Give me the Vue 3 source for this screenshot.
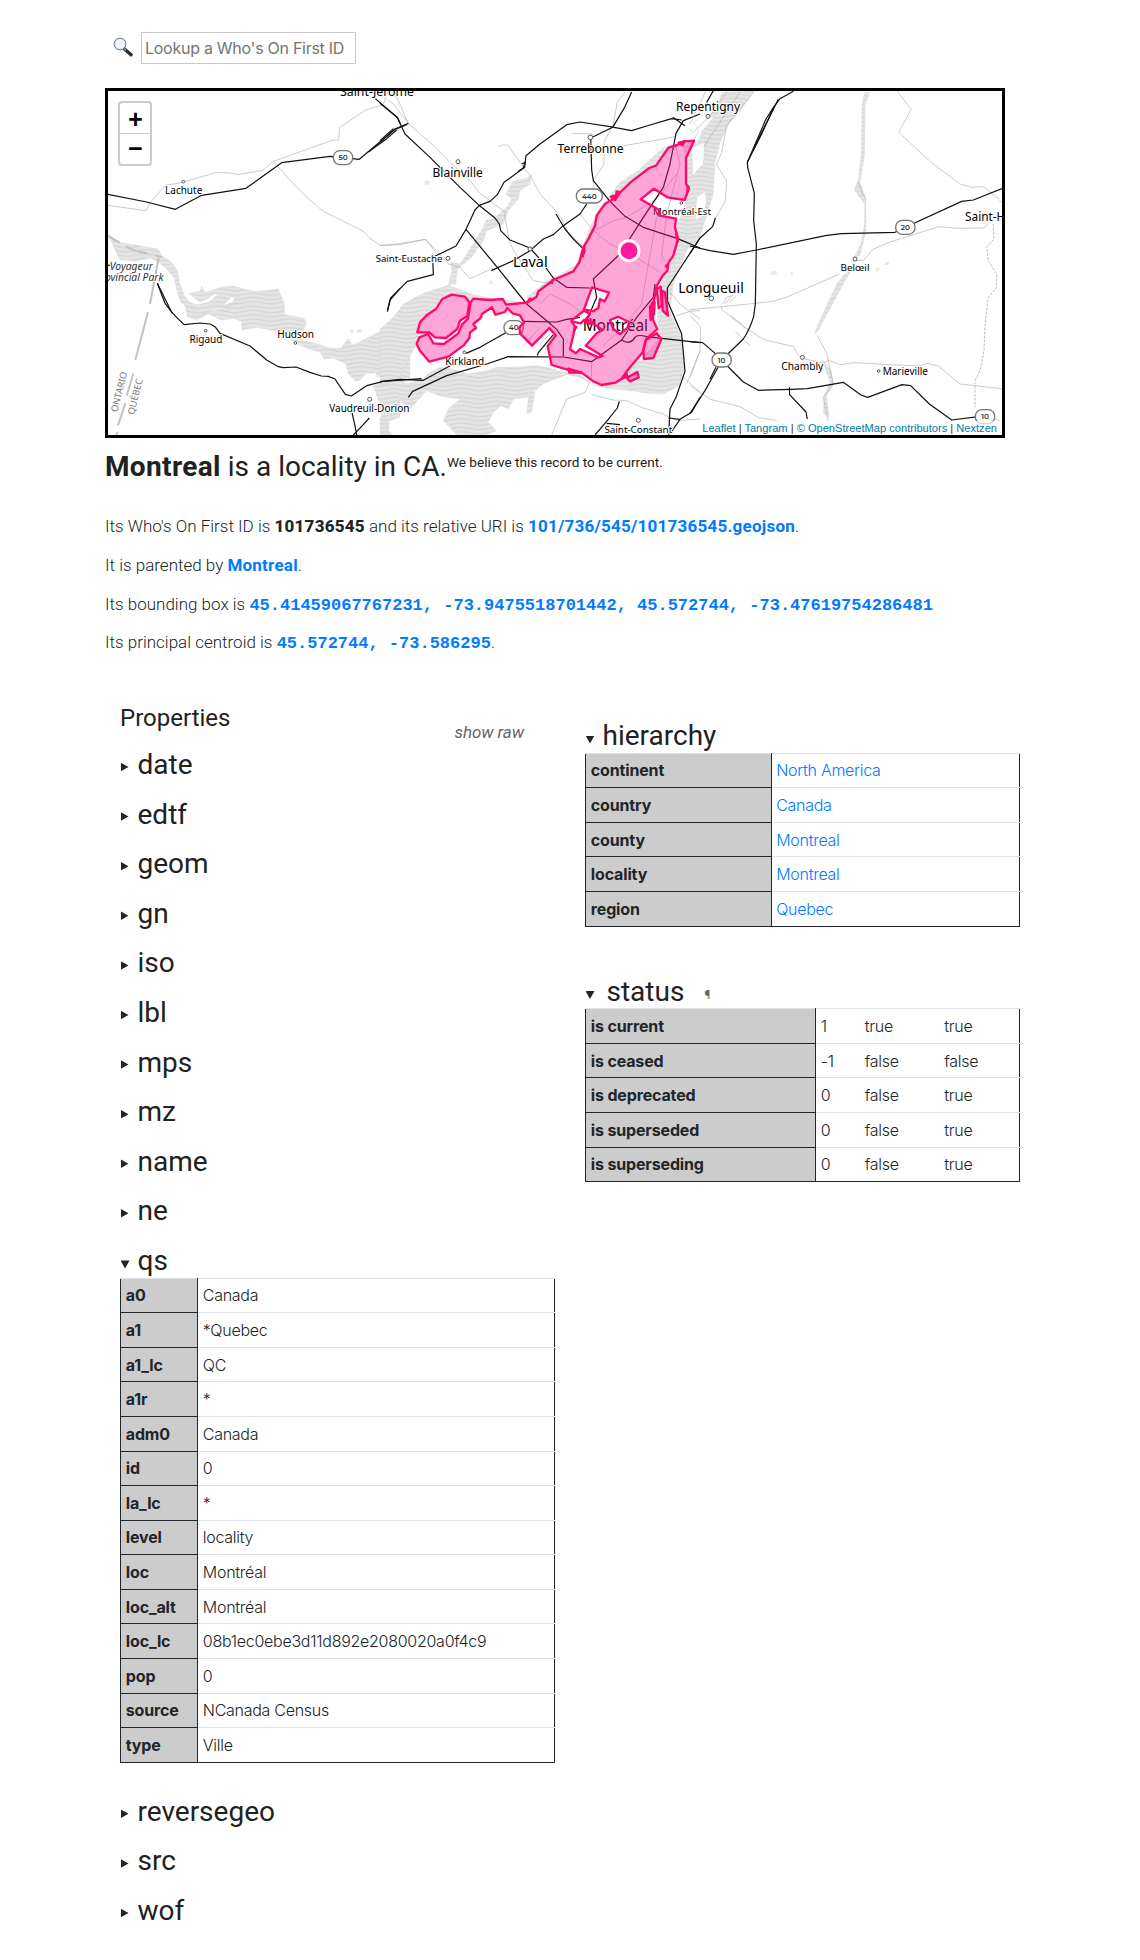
<script setup>
const closedTop = ['date', 'edtf', 'geom', 'gn', 'iso', 'lbl', 'mps', 'mz', 'name', 'ne']
const closedBottom = ['reversegeo', 'src', 'wof']

const qs = [
  ['a0', 'Canada'], ['a1', '*Quebec'], ['a1_lc', 'QC'], ['a1r', '*'], ['adm0', 'Canada'],
  ['id', '0'], ['la_lc', '*'], ['level', 'locality'], ['loc', 'Montréal'], ['loc_alt', 'Montréal'],
  ['loc_lc', '08b1ec0ebe3d11d892e2080020a0f4c9'], ['pop', '0'], ['source', 'NCanada Census'], ['type', 'Ville'],
]
const hierarchy = [
  ['continent', 'North America'], ['country', 'Canada'], ['county', 'Montreal'],
  ['locality', 'Montreal'], ['region', 'Quebec'],
]
const status = [
  ['is current', '1', 'true', 'true'],
  ['is ceased', '-1', 'false', 'false'],
  ['is deprecated', '0', 'false', 'true'],
  ['is superseded', '0', 'false', 'true'],
  ['is superseding', '0', 'false', 'true'],
]

// City boundary: main island (with holes), western tip, and small islands.
const cityMain = `M942 170 L918 222 L918 300 L927 312 L914 348 L862 340 L822 314 L782 346 L838 378 L836 394 L888 404 L885 430 L894 464 L880 515 L866 535 L862 560 L848 575 L830 606 L822 650 L815 660 L820 710 L832 735 L798 765 L788 805 L740 862 L735 878 L706 896 L665 903 L640 892 L608 868 L560 856 L515 843 L503 786 L527 754 L508 732 L456 785 L420 748 L418 730 L432 716 L420 694 L398 688 L382 672 L375 684 L346 692 L336 670 L306 690 L302 702 L280 720 L288 732 L270 745 L268 762 L250 785 L205 818 L148 833 L120 800 L110 780 L118 760 L144 750 L160 778 L192 780 L235 748 L246 722 L264 704 L272 655 L280 644 L330 648 L368 645 L378 662 L440 656 L470 638 L475 622 L520 588 L580 562 L598 535 L610 490 L625 465 L645 425 L650 395 L675 360 L700 345 L755 292 L808 252 L828 245 L866 190 L892 183 L912 172 Z`
const cityHoles = `M636 610 L687 626 L674 652 L660 645 L655 672 L640 682 L612 676 Z
  M612 680 L630 690 L618 705 L668 738 L650 748 L617 785 L668 816 L655 820 L600 795 L588 808 L570 796 L582 745 L584 727 L574 710 Z
  M690 708 L715 698 L748 715 L742 732 L720 750 L700 735 Z`
const cityWest = 'M112 745 L120 715 L142 692 L168 675 L187 645 L215 632 L255 638 L268 655 L262 696 L240 710 L232 735 L198 762 L165 760 L148 745 Z'

// The map is drawn in three side-by-side sections, each with its own origin.
const sections = [
  {
    x: 0,
    water: [
      'M24 450 L60 476 L110 483 L176 495 L184 512 L215 535 L232 560 L240 600 L252 632 L268 655 L290 662 L325 655 L352 632 L345 628 L330 640 L300 655 L280 640 L268 628 L300 622 L305 606 L315 625 L370 608 L400 606 L432 615 L470 622 L510 618 L535 614 L545 640 L554 662 L553 692 L580 696 L612 703 L620 718 L610 738 L590 762 L620 770 L660 782 L690 792 L722 793 L745 762 L758 784 L790 768 L840 742 L890 728 L930 712 L930 884 L830 878 L828 866 L800 868 L822 850 L830 848 L812 854 L795 872 L780 888 L768 892 L745 870 L738 840 L700 822 L672 826 L662 806 L630 796 L590 780 L545 745 L510 738 L470 730 L425 738 L425 712 L400 704 L365 708 L325 690 L290 708 L262 700 L256 668 L240 650 L230 618 L222 582 L200 555 L172 532 L150 522 L110 532 L60 528 L46 500 Z',
      'M820 905 L850 892 L900 888 L900 1000 L868 1010 L866 1040 L880 1053 L852 1053 L840 1020 L845 990 L835 950 Z',
    ],
    gaps: ['M370 662 L395 638 L405 640 L400 655 L372 664 Z', 'M305 692 L345 674 L400 662 L414 656 L380 668 Z'],
    minor: [
      'M24 364 L138 380 L150 356 L196 304 L240 297 L350 265 L388 267 L415 272 L487 259 L520 232 L660 182 L692 170 L712 168 L716 166 L719 130 L797 78 L850 62 L862 24',
      'M520 232 L560 278 L622 342 L670 382 L790 442 L806 460 L840 484 L900 482 L978 466 L1010 510',
      'M862 24 L890 40 L925 118',
    ],
    major: [
      'M24 331 L140 354 L226 376 L305 334 L438 313 L545 236 L690 217 L778 226 L885 136 L920 122',
      'M805 204 L860 164 L890 138',
      'M172 598 L215 685 L252 722 L300 717 L330 720 L345 728 L360 748 L450 786 L500 828 L535 848 L550 851 L588 849 L630 865 L664 876 L685 877 L705 885 L736 931 L754 936 L800 905 L850 892 L965 884',
      'M172 598 L195 658 L218 688',
      'M756 985 L766 1030 L770 1053 M760 1053 L790 1022 L808 1002',
      'M826 44 L893 102 L901 120', 'M900 614 L870 648 L862 682', 'M22 543 L34 545',
    ],
  },
  {
    x: 840,
    water: [
      'M0 736 L40 700 L70 660 L130 628 L205 604 L222 610 L280 632 L350 645 L440 655 L450 672 L380 662 L300 655 L230 700 L160 740 L105 790 L70 850 L60 880 L78 900 L130 885 L145 868 L180 850 L205 852 L265 870 L310 862 L350 850 L420 848 L470 845 L500 850 L540 862 L600 870 L640 905 L700 900 L740 862 L790 820 L840 760 L832 700 L840 600 L862 560 L885 490 L890 430 L920 345 L920 230 L960 150 L960 440 L920 500 L880 600 L870 680 L905 760 L912 860 L900 905 L850 930 L800 928 L750 920 L700 915 L640 905 L600 880 L560 872 L490 900 L465 920 L455 985 L440 990 L445 940 L400 945 L385 975 L362 965 L340 985 L325 1015 L350 1040 L320 1052 L230 1052 L190 1010 L205 975 L240 945 L185 938 L140 920 L90 975 L60 950 L40 905 L0 905 Z',
      'M0 1000 L20 1020 L25 1050 L0 1053 Z',
      'M205 604 L215 560 L212 535 L240 540 L270 495 L310 430 L318 408 L340 404 L380 370 L395 345 L378 330 L400 290 L440 282 L455 270 L450 300 L420 320 L415 345 L385 380 L370 420 L320 440 L310 470 L275 520 L232 556 L228 600 Z',
      'M440 640 L500 590 L560 560 L590 540 L625 440 L660 370 L690 335 L720 295 L780 255 L850 190 L885 195 L850 240 L760 290 L705 345 L650 430 L600 550 L520 595 L450 660 Z',
    ],
    gaps: [cityMain, cityWest],
    minor: [
      'M0 485 L50 480 L135 466 L170 500 L205 540 L240 550 L270 584 L340 552',
      'M22 48 L40 60 L85 118 L150 175 L210 235 L262 280 L300 328 L372 382 L388 470 L400 498 L460 590 L520 600',
      'M355 188 Q370 178 384 184 L425 242 L452 278 L480 330 L520 372 L545 405 L560 440 L620 500',
      'M735 24 L712 55 L700 120 L672 175 L672 240 L640 290 L644 330',
      'M600 390 L640 440 L690 480 L760 515 L840 565', 'M635 445 L700 410 L740 400 L830 345 L890 270',
      'M885 180 L900 240 L860 390 L845 515 L855 530', 'M830 400 L798 580 L785 660 L720 740 L690 765 L670 785',
      'M635 932 L700 948 L740 950 L790 972 L850 990 L890 1010 L960 1005',
      'M515 1053 L560 945 L615 925 L635 880 L634 830', 'M480 660 L510 630 L570 660 L610 690',
      'M865 620 L900 660 L960 705 M890 695 L930 682 L960 680 M900 870 L960 925 M920 900 L960 800',
      'M700 190 L760 180 L850 165 L885 158 M575 148 L640 150 M432 785 L480 730 M472 765 L510 732 M480 780 L518 742',
    ],
    major: [
      'M0 58 L52 100 L75 150 L150 220 L240 310 L295 362 L345 402 L358 420 L362 440 L390 468 L450 492 L475 520 L520 582 L560 610 L630 612',
      'M0 175 L45 135 L85 118', 'M0 170 L40 134',
      'M158 520 L228 486 L258 436 L285 378 L298 364 L330 352 L352 332 L372 295 L434 250 L438 215 L480 180 L560 122 L600 114 L690 128 L755 140 L800 126 L875 104 L905 108',
      'M158 520 L160 572 L82 592 L32 642 L22 682',
      'M755 24 L734 70 L698 130 L632 162 L635 258 L640 290 L690 352 L735 397 L790 430 L893 464 L960 492',
      'M258 436 L350 548 L440 660 L500 710 L530 736 L550 765 L550 816',
      'M334 560 L400 530 L450 500 L490 465 L520 452 L550 425 L600 390 L620 360',
      'M425 240 L435 235 L430 252 L415 262 M528 390 L555 435 L580 465 L615 500 L612 510',
      'M0 893 L60 886 L130 889 L180 862 L220 840 M258 808 L300 790 L380 745 M430 712 L530 714 L560 706 L600 700 M620 710 L650 640 L640 585 L720 510 L790 400 L850 310 L870 240 L888 148 L910 110 L960 90',
      'M85 940 L98 922 L200 875 L320 840 L385 818 L550 819 L635 833 L725 768 L770 700 L820 640 L825 600',
      'M472 815 L475 806 L520 752', 'M960 462 L862 612 L862 650 L905 750 L915 862 L888 940 L870 975 L866 1053',
      'M725 768 Q750 785 765 760 Q772 750 800 758 L845 763 L960 776', 'M865 1002 L900 1006 L935 985 L960 940 M900 1006 L870 1050',
      'M718 952 L712 972 L680 1012 L645 1053 M680 1018 L720 1022 M878 100 L915 125',
    ],
  },
  {
    x: 1770,
    water: [
      'M95 24 L192 20 L150 80 L118 118 L92 170 L75 235 L70 330 L45 410 L30 460 L0 492 L-12 470 L-8 270 L-20 190 L10 165 L40 130 L55 100 L85 60 Z',
      'M524 24 L540 24 L526 60 L524 215 L510 295 L528 345 L528 440 L510 515 L492 522 L512 480 L522 430 L524 360 L492 318 L504 292 L514 205 L516 60 Z',
      'M492 532 L484 560 L465 590 L382 745 L374 748 L382 725 L440 600 L460 575 L480 560 Z',
      'M396 825 L424 860 L430 900 L410 935 L418 1000 L400 990 L402 935 L420 895 Z',
    ],
    gaps: ['M5 190 L45 175 L40 240 L8 275 Z', 'M20 340 L45 322 L50 350 L40 395 L15 410 Z', 'M12 115 L45 90 L72 100 L38 140 L20 185 L12 172 L25 140 Z'],
    minor: [
      'M192 24 L110 125 L95 205 L80 242 L110 292 L106 352 L75 405', 'M46 24 L0 120 M110 24 L60 95 L10 145 L0 135 M150 24 L40 190',
      'M620 20 L664 76 L626 145 L720 232 L810 300 L845 310 L880 308 L920 340 L936 356',
      'M0 677 L94 668 L198 658 L252 651 L290 640 L448 570 M500 530 L522 528 L548 496 L600 474 L745 428 L800 433 L880 432 L896 420',
      'M94 668 L95 676 L160 728 L222 767 L312 788 L322 810 L334 822 L358 828 L400 838 L415 829 L452 842 L492 836 L600 842 L690 846 L712 838 L745 846 L810 900 L936 914',
      'M0 695 L32 728 L30 802 L0 880 M0 905 L60 946 L150 968 L205 1000 L250 1008 L300 1030', 'M382 755 L410 808 L430 900 L400 940 L418 1030',
      'M98 660 L110 640 L125 635 M104 660 L130 632 M118 655 L138 638 M914 1003 L936 1016', 'M505 295 L518 330 L528 345',
      'M122 694 L175 738 M136 742 L180 785',
    ],
    major: [
      'M70 20 L50 55', 'M310 22 L270 44 L252 68 L228 105 L172 235 L173 250 L193 328 L191 410 L199 480 L196 660 L191 697 Q180 735 160 765 L98 825 L45 920 L0 988',
      'M252 68 L215 150 L172 235', 'M265 46 L238 100 L190 195',
      'M0 486 L60 500 L130 511 L200 498 L410 454 L455 449 L615 445 L646 430 L815 352 L850 348 L936 314',
      'M76 402 L68 428 L30 462 L0 508', 'M0 773 L38 776 L72 805 L94 828 L160 894 L205 919 L300 916 L352 914 L460 895 L513 933 L533 940 L636 902 L662 905 L718 960 L785 1008 L865 998',
      'M298 910 L299 932 L348 984 L352 1005', 'M78 850 L60 885',
    ],
  },
]

// Place names; x and y are the middle of the baseline.
const labels = [
  { t: 'Saint-Jérôme', x: 831, y: 35, s: 37 }, { t: 'Lachute', x: 251, y: 331, s: 30, c: [250, 293, 4] },
  { t: 'Rigaud', x: 318, y: 777, s: 30, c: [317, 740, 4] }, { t: 'Hudson', x: 587, y: 762, s: 30, c: [586, 777, 4] },
  { t: 'Vaudreuil-Dorion', x: 808, y: 984, s: 30, c: [809, 946, 6] }, { t: 'Saint-Eustache', x: 927, y: 534, s: 29, c: [1044, 523, 6] },
  { t: 'Blainville', x: 1073, y: 278, s: 36, c: [1074, 233, 6] }, { t: 'Terrebonne', x: 1472, y: 208, s: 36.5, c: [1471, 160, 7] },
  { t: 'Laval', x: 1291, y: 549, s: 43, c: [1290, 495, 6] }, { t: 'Kirkland', x: 1094, y: 844, s: 30, c: [1093, 805, 4] },
  { t: 'Saint-Constant', x: 1615, y: 1048, s: 29.5, c: [1615, 1009, 6] }, { t: 'Repentigny', x: 1824, y: 80, s: 36, c: [1824, 97, 6] },
  { t: 'Montréal-Est', x: 1746, y: 393, s: 29, c: [1744, 357, 4] }, { t: 'Montréal', x: 1546, y: 740, s: 46 },
  { t: 'Longueuil', x: 1833, y: 626, s: 42, c: [1834, 643, 7] }, { t: 'Belœil', x: 2265, y: 562, s: 29.5, c: [2265, 525, 6] },
  { t: 'Chambly', x: 2107, y: 859, s: 30.5, c: [2107, 820, 6] }, { t: 'Marieville', x: 2416, y: 872, s: 30, c: [2336, 861, 4] },
  { t: 'Saint-Hyacinthe', x: 2726, y: 410, s: 35.5 },
]
const shields = [
  { t: '50', x: 729, y: 221, w: 58 }, { t: '440', x: 1468, y: 336, w: 78 }, { t: '40', x: 1241, y: 731, w: 58 },
  { t: '10', x: 1865, y: 828, w: 58 }, { t: '20', x: 2416, y: 430, w: 58 }, { t: '10', x: 2655, y: 998, w: 58 },
]
const attribution = ['Leaflet', 'Tangram', '© OpenStreetMap contributors', 'Nextzen']
</script>

<template>
  <main class="page">
    <form class="lookup" @submit.prevent>
      <svg class="lens" viewBox="0 0 20 20" width="20" height="20">
        <path d="M11.5 12 L18 17.8" stroke="#25313b" stroke-width="3.4" stroke-linecap="round" />
        <path d="M10.8 11.2 L13 13.2" stroke="#8b98a3" stroke-width="1.5" />
        <circle cx="7" cy="7" r="5.9" fill="#f1f4f6" stroke="#5d6871" stroke-width="1" />
        <circle cx="7" cy="7" r="5" fill="none" stroke="#cfd8df" stroke-width=".7" />
      </svg>
      <input type="text" placeholder="Lookup a Who's On First ID">
    </form>

    <section class="map">
      <svg class="canvas" viewBox="24 21 2682 1032" width="894" height="344" fill="none">
        <defs>
          <pattern id="waves" width="108" height="13" patternUnits="userSpaceOnUse">
            <rect width="108" height="13" fill="#e5e5e5" />
            <path d="M0 6.5 C18 2 36 2 54 6.5 S90 11 108 6.5" fill="none" stroke="#d6d6d6" stroke-width="4" />
          </pattern>
        </defs>
        <rect x="24" y="21" width="2682" height="1032" fill="#fff" />
        <g v-for="s in sections" :key="'w' + s.x" :transform="`translate(${s.x} 0)`">
          <path v-for="(d, i) in s.water" :key="i" :d="d" fill="url(#waves)" stroke="#d4d4d4" stroke-width="1.5" stroke-dasharray="3 3" />
          <path v-for="(d, i) in s.gaps" :key="'g' + i" :d="d" fill="#fff" stroke="#ccc" stroke-width="1.5" />
        </g>
        <path d="M2680 420 L2682 465 L2660 490 L2665 530 L2690 570 L2690 610 L2665 640 L2655 720 L2652 800 L2640 860 L2625 890 L2625 970" stroke="#bbb" stroke-width="3" stroke-dasharray="8 4" />
        <g fill="#e8e8e8">
          <rect x="2012" y="562" width="18" height="11" /><rect x="2355" y="534" width="12" height="9" />
          <rect x="2328" y="552" width="10" height="10" /><rect x="2071" y="565" width="8" height="8" />
          <rect x="974" y="290" width="14" height="12" /><rect x="1168" y="590" width="10" height="10" />
          <rect x="750" y="738" width="10" height="9" /><rect x="772" y="735" width="12" height="12" />
        </g>
        <g v-for="s in sections" :key="'r' + s.x" :transform="`translate(${s.x} 0)`" stroke-linejoin="round">
          <path v-for="(d, i) in s.minor" :key="'m' + i" :d="d" stroke="#b0b0b0" stroke-width="2" />
          <path v-for="(d, i) in s.major" :key="'M' + i" :d="d" stroke="#111" stroke-width="3.6" />
        </g>
        <path d="M24 456 L60 476 M78 487 Q102 502 142 508 M166 514 L186 520 M176 522 L150 660 M144 684 L106 828 M100 868 L80 935 M76 958 L54 1024 M53 1044 L50 1053" stroke="#c2c2c2" stroke-width="6" />

        <g class="names">
          <template v-for="l in labels" :key="l.t">
            <text :x="l.x" :y="l.y" :font-size="l.s">{{ l.t }}</text>
            <circle v-if="l.c" :cx="l.c[0]" :cy="l.c[1]" :r="l.c[2]" fill="#fff" stroke="#555" stroke-width="3" />
          </template>
          <text x="94" y="557" font-size="31" font-style="italic" class="park">Voyageur</text>
          <text x="88" y="592" font-size="31" font-style="italic" class="park">Provincial Park</text>
          <text class="border-name" transform="translate(67 926) rotate(-76)" font-size="28">ONTARIO</text>
          <text class="border-name" transform="translate(115 940) rotate(-76)" font-size="28">QUÉBEC</text>
        </g>
        <g v-for="(s, i) in shields" :key="'s' + i">
          <rect :x="s.x - s.w / 2" :y="s.y - 21" :width="s.w" height="42" rx="20" fill="#fff" stroke="#777" stroke-width="4" />
          <text class="shield" :x="s.x" :y="s.y + 8">{{ s.t }}</text>
        </g>

        <g transform="translate(840 0)" fill="#ff1493" fill-opacity=".38" fill-rule="evenodd" stroke="#ff0a6c" stroke-width="7" stroke-linejoin="round">
          <path :d="cityMain + cityHoles" />
          <path :d="cityWest" />
          <path d="M830 615 L842 608 L846 665 L836 672 Z M846 620 L855 625 L864 695 L848 680 Z M798 768 L830 748 L844 766 L820 822 L792 825 L790 800 Z M740 882 L772 864 L776 880 L750 892 Z" />
          <path d="M565 854 L605 866 L568 866 Z M896 176 L914 172 L908 184 Z M692 338 L708 335 L710 322 L720 326 L705 348 Z M810 668 L824 655 L822 690 L812 708 Z M724 885 L738 866 L742 876 Z" />
          <path d="M608 520 L614 485 M515 600 L518 585 M440 656 L450 644 L458 650 M574 712 L602 718 L612 708 L630 720 L632 702 M590 726 L580 745 M888 448 L894 475 M862 540 L856 550 M924 304 L922 325" fill="none" />
        </g>
        <circle cx="1587" cy="500" r="30" fill="#ff1a9c" stroke="#fff" stroke-width="9" />
      </svg>
      <div class="zoom"><span>+</span><span>−</span></div>
      <div class="attribution">
        <template v-for="(a, i) in attribution" :key="a"><template v-if="i"> | </template><a>{{ a }}</a></template>
      </div>
    </section>

    <h1 class="title"><span><strong>Montreal</strong> is a locality in CA.</span><small>We believe this record to be current.</small></h1>

    <div class="facts">
      <p>Its Who's On First ID is <strong>101736545</strong> and its relative URI is <a>101/736/545/101736545.geojson</a>.</p>
      <p>It is parented by <a>Montreal</a>.</p>
      <p>Its bounding box is <a class="mono">45.41459067767231, -73.9475518701442, 45.572744, -73.47619754286481</a></p>
      <p>Its principal centroid is <a class="mono">45.572744, -73.586295</a>.</p>
    </div>

    <div class="columns">
      <section class="col">
        <header class="props-head"><h2>Properties</h2><em>show raw</em></header>
        <h3 v-for="n in closedTop" :key="n"><i class="tri"></i>{{ n }}</h3>
        <h3 class="open"><i class="tri down"></i>qs</h3>
        <table class="qs">
          <tbody>
            <tr v-for="r in qs" :key="r[0]"><th>{{ r[0] }}</th><td>{{ r[1] }}</td></tr>
          </tbody>
        </table>
        <h3 v-for="n in closedBottom" :key="n"><i class="tri"></i>{{ n }}</h3>
      </section>

      <section class="col side">
        <h3 class="open"><i class="tri down"></i>hierarchy</h3>
        <table class="hierarchy">
          <tbody>
            <tr v-for="r in hierarchy" :key="r[0]"><th>{{ r[0] }}</th><td><a>{{ r[1] }}</a></td></tr>
          </tbody>
        </table>
        <h3 class="open status-head"><i class="tri down"></i>status<small>¶</small></h3>
        <table class="status">
          <tbody>
            <tr v-for="r in status" :key="r[0]"><th>{{ r[0] }}</th><td v-for="(v, i) in r.slice(1)" :key="i">{{ v }}</td></tr>
          </tbody>
        </table>
      </section>
    </div>
  </main>
</template>

<style>
body { background: #fff; }
</style>

<style scoped>
* { box-sizing: border-box; }
.page { width: 930px; height: 1960px; margin-left: 105px; padding-top: 32px; overflow: hidden; font: 300 17px/24px Roboto, sans-serif; color: #212529; }
h1, h2, h3, p { margin: 0; }
a { color: #007bff; text-decoration: none; }

.lookup { display: flex; height: 32px; padding-left: 8px; }
.lens { margin: 5px 8px 0 0; }
.lookup input { width: 215px; height: 32px; padding: 0 3px; border: 1px solid #c8c8c8; border-radius: 0; outline: 0; font: 400 16px Inter, sans-serif; letter-spacing: -.27px; }
.lookup input::placeholder { color: #757575; opacity: 1; }

.map { position: relative; width: 900px; height: 350px; margin-top: 24px; border: 3px solid #000; }
.canvas { display: block; }
.names text { font-family: "Noto Sans", sans-serif; font-weight: 400; text-anchor: middle; fill: #000; stroke: #fff; stroke-width: 6px; stroke-linejoin: round; paint-order: stroke; }
.names .park { fill: #333; }
.names .border-name { fill: #777; }
.shield { font: 600 22px Montserrat, "Open Sans", sans-serif; text-anchor: middle; fill: #333; }
.zoom { position: absolute; left: 10px; top: 10px; width: 34px; height: 65px; border: 2px solid #ccc; border-radius: 4px; background: #fff; }
.zoom span { display: block; height: 30px; padding-left: 1px; font: 700 25px/37px "Liberation Mono", monospace; text-align: center; color: #000; }
.zoom span + span { height: 31px; border-top: 1px solid #ccc; line-height: 34px; }
.attribution { position: absolute; right: 0; bottom: 0; padding: 0 5px; background: rgba(255, 255, 255, .7); font: 400 11.1px/14px "Liberation Sans", sans-serif; color: #333; white-space: nowrap; }
.attribution a { color: #0078a8; }

.title { display: flex; height: 34px; margin-top: 12px; font-weight: 400; font-size: 28px; line-height: 33.6px; color: #212121; white-space: nowrap; }
.title strong { font-weight: 700; letter-spacing: .35px; }
.title small { font-size: 13.6px; line-height: 24px; }

.facts { margin-top: 30px; height: 189px; }
.facts p { height: 38.8px; line-height: 24px; white-space: nowrap; }
.facts strong, .facts a { font-weight: 700; letter-spacing: .24px; }
.facts strong { font-weight: 800; }
.facts .mono { font-family: "Liberation Mono", monospace; font-size: 17px; line-height: 1; letter-spacing: 0; }

.columns { display: flex; }
.col { width: 465px; padding: 0 15px; }
.props-head { display: flex; justify-content: space-between; height: 45px; padding-right: 31px; }
.props-head h2 { margin-top: 1px; font-weight: 400; font-size: 24px; line-height: 28.8px; color: #212121; }
.props-head em { margin-top: 17px; font-weight: 400; letter-spacing: -.08px; color: #666; }
h3 { display: flex; height: 49.6px; font-weight: 400; font-size: 28px; line-height: 33.6px; color: #212121; }
h3.open { height: 33.6px; }
.tri { width: 8px; height: 9px; margin: 14.5px 9px 0 .5px; background: #212529; clip-path: polygon(0 0, 100% 50%, 0 100%); }
.tri.down { width: 9px; height: 8px; margin: 16.5px 8px 0 .5px; clip-path: polygon(0 0, 100% 0, 50% 100%); }
.side { padding-top: 16px; }
.status-head .tri.down { margin-right: 12px; }
.status-head small { margin: 4px 0 0 20px; font-size: 12px; color: #666; }

table { width: 435px; margin-bottom: 32px; border: 1px solid #212529; border-collapse: collapse; table-layout: fixed; font-family: Inter, sans-serif; font-size: 16px; letter-spacing: -.27px; }
th, td { padding: 4.8px; border-top: 1px solid #dee2e6; text-align: left; line-height: 24px; font-weight: 300; }
th { border-right: 1px solid #212529; border-bottom: 1px solid #212529; background: #ccc; font-weight: 700; letter-spacing: -.15px; }
.qs th { width: 77px; }
.hierarchy th { width: 186px; }
.hierarchy td { padding-left: 4.2px; }
.hierarchy { margin-bottom: 48px; }
.status th { width: 230px; }
.status td:nth-child(2) { width: 44.5px; }
.status td:nth-child(3) { width: 79.5px; }
</style>
